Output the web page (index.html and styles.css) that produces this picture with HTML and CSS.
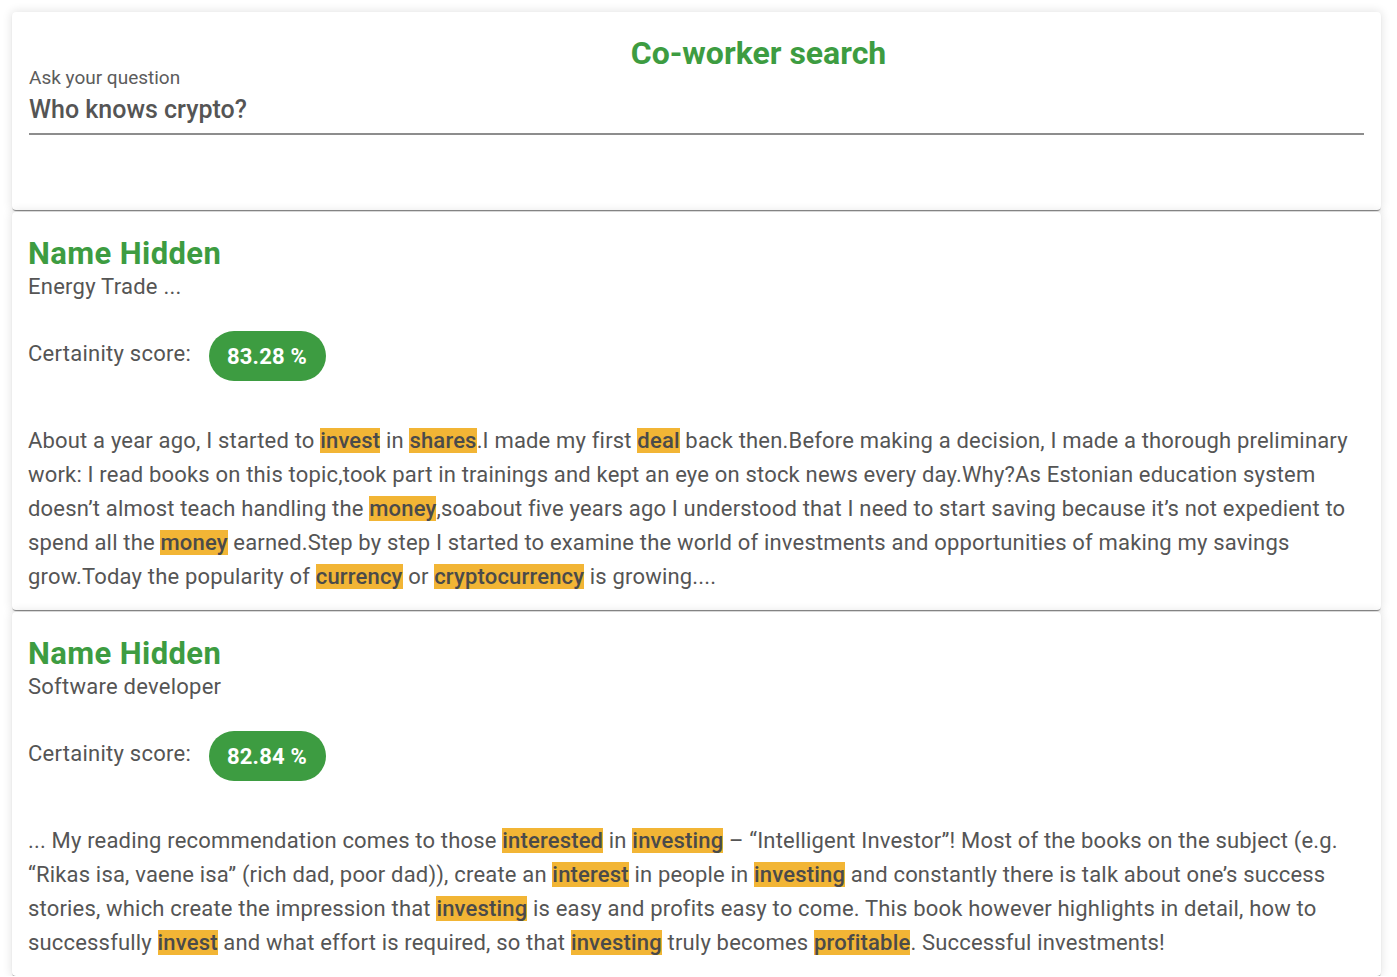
FILE: index.html
```html
<!DOCTYPE html>
<html lang="en">
<head>
<meta charset="utf-8">
<title>Co-worker search</title>
<link rel="stylesheet" href="styles.css">
</head>
<body>
<main class="page">
  <section class="card search-card">
    <h1 class="app-title">Co-worker search</h1>
    <div class="field">
      <div class="field-label">Ask your question</div>
      <div class="field-input">Who knows crypto?</div>
    </div>
  </section>

  <article class="card result">
    <h2 class="name">Name Hidden</h2>
    <div class="role">Energy Trade ...</div>
    <div class="score-row">
      <span class="score-label">Certainity score:</span>
      <span class="score-pill">83.28 %</span>
    </div>
    <p class="excerpt">About a year ago, I started to <mark>invest</mark> in <mark>shares</mark>.I made my first <mark>deal</mark> back then.Before making a decision, I made a thorough preliminary work: I read books on this topic,took part in trainings and kept an eye on stock news every day.Why?As Estonian education system doesn’t almost teach handling the <mark>money</mark>,soabout five years ago I understood that I need to start saving because it’s not expedient to spend all the <mark>money</mark> earned.Step by step I started to examine the world of investments and opportunities of making my savings grow.Today the popularity of <mark>currency</mark> or <mark>cryptocurrency</mark> is growing....</p>
  </article>

  <article class="card result">
    <h2 class="name">Name Hidden</h2>
    <div class="role">Software developer</div>
    <div class="score-row">
      <span class="score-label">Certainity score:</span>
      <span class="score-pill">82.84 %</span>
    </div>
    <p class="excerpt">... My reading recommendation comes to those <mark>interested</mark> in <mark>investing</mark> – “Intelligent Investor”! Most of the books on the subject (e.g. “Rikas isa, vaene isa” (rich dad, poor dad)), create an <mark>interest</mark> in people in <mark>investing</mark> and constantly there is talk about one’s success stories, which create the impression that <mark>investing</mark> is easy and profits easy to come. This book however highlights in detail, how to successfully <mark>invest</mark> and what effort is required, so that <mark>investing</mark> truly becomes <mark>profitable</mark>. Successful investments!</p>
  </article>
</main>
</body>
</html>
```

FILE: styles.css
```css
* { box-sizing: border-box; }

html, body {
  margin: 0;
  padding: 0;
  background: #ffffff;
}

body {
  font-family: Roboto, "Liberation Sans", Arial, sans-serif;
  color: #575757;
}

.page {
  display: flex;
  flex-direction: column;
  gap: 2px;
  padding: 12px 16px 0 12px;
}

.card {
  background: #ffffff;
  border-radius: 4px;
  box-shadow: 0 2px 1px -1px rgba(0, 0, 0, 0.38),
              0 1px 1px 0 rgba(0, 0, 0, 0.14),
              0 0 10px 1px rgba(0, 0, 0, 0.11);
  padding: 0 16px;
}

/* search card */
.search-card {
  height: 198px;
  padding-top: 26px;
}

.app-title {
  margin: 0;
  font-size: 32px;
  line-height: 30px;
  font-weight: 700;
  color: #3d9c41;
  text-align: center;
  padding-left: 124px;
}

.field {
  padding: 0 1px;
}

.field-label {
  font-size: 19px;
  line-height: 20px;
  color: #5c5c5c;
}

.field-input {
  margin-top: 6px;
  font-size: 25px;
  line-height: 32px;
  font-weight: 500;
  color: #555555;
  padding-bottom: 7px;
  border-bottom: 2px solid #8d8d8d;
}

/* results */
.result {
  padding-top: 24px;
  padding-bottom: 16px;
}

.name {
  margin: 0;
  font-size: 31px;
  line-height: 36px;
  font-weight: 700;
  letter-spacing: 0.4px;
  color: #3d9c41;
}

.role {
  margin-top: 2px;
  font-size: 22px;
  line-height: 26px;
  letter-spacing: 0.25px;
  color: #555555;
}

.score-row {
  display: flex;
  align-items: center;
  gap: 18px;
  margin-top: 31px;
  height: 50px;
}

.score-label {
  font-size: 22px;
  letter-spacing: 0.25px;
  padding-bottom: 5px;
  color: #555555;
}

.score-pill {
  display: inline-flex;
  align-items: center;
  height: 50px;
  padding: 0 19px 0 18px;
  border-radius: 25px;
  background: #3d9c41;
  color: #ffffff;
  font-size: 22px;
  font-weight: 700;
  letter-spacing: 0.2px;
}

.excerpt {
  margin: 43px 0 0 0;
  font-size: 22px;
  line-height: 34px;
  letter-spacing: 0.18px;
  color: #555555;
}

mark {
  background: #f2b535;
  color: #4a4a4a;
  font-weight: 500;
}
```
